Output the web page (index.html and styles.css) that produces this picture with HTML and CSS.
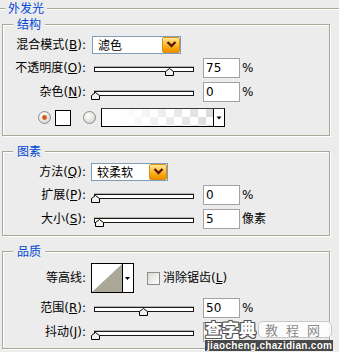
FILE: index.html
```html
<!DOCTYPE html>
<html>
<head>
<meta charset="utf-8">
<link rel="stylesheet" href="styles.css">
</head>
<body>
<div class="panel">
  <div class="outer">
    <div class="legend legend-outer">外发光</div>

    <div class="group g1">
      <div class="legend">结构</div>
      <div class="row r-sel">
        <span class="lbl">混合模式(<u>B</u>):</span>
        <div class="select sel-blend">
          <span class="sel-text">滤色</span>
          <span class="sel-btn"><svg width="17" height="16" viewBox="0 0 17 16"><polyline points="4.5,5.5 8.5,9.5 12.5,5.5" fill="none" stroke="#fff" stroke-width="1" opacity="0.6" transform="translate(0,1)"/><polyline points="4.5,5 8.5,9 12.5,5" fill="none" stroke="#5a1500" stroke-width="2.4"/></svg></span>
        </div>
      </div>
      <div class="row r-num mt4">
        <span class="lbl">不透明度(<u>O</u>):</span>
        <div class="slider"><div class="track"></div><svg class="thumb" style="left:74px" width="9" height="8" viewBox="0 0 9 8"><polygon points="0.5,3.5 4.5,0.5 8.5,3.5 8.5,7.5 0.5,7.5" fill="#f2f2ee" stroke="#000"/></svg></div>
        <div class="num">75</div><span class="unit">%</span>
      </div>
      <div class="row r-num mt4">
        <span class="lbl">杂色(<u>N</u>):</span>
        <div class="slider"><div class="track"></div><svg class="thumb" style="left:0px" width="9" height="8" viewBox="0 0 9 8"><polygon points="0.5,3.5 4.5,0.5 8.5,3.5 8.5,7.5 0.5,7.5" fill="#f2f2ee" stroke="#000"/></svg></div>
        <div class="num">0</div><span class="unit">%</span>
      </div>
      <div class="row r-color">
        <svg class="radio" width="13" height="13" viewBox="0 0 13 13"><defs><radialGradient id="rg1" cx="0.4" cy="0.35" r="0.75"><stop offset="0" stop-color="#ffffff"/><stop offset="1" stop-color="#d2d2ca"/></radialGradient></defs><circle cx="6.5" cy="6.5" r="6" fill="url(#rg1)" stroke="#8c8c8c"/><circle cx="6.5" cy="6.5" r="2.4" fill="#d5561d"/></svg>
        <div class="swatch"></div>
        <svg class="radio radio2" width="13" height="13" viewBox="0 0 13 13"><defs><radialGradient id="rg2" cx="0.4" cy="0.35" r="0.75"><stop offset="0" stop-color="#ffffff"/><stop offset="1" stop-color="#d2d2ca"/></radialGradient></defs><circle cx="6.5" cy="6.5" r="6" fill="url(#rg2)" stroke="#8c8c8c"/></svg>
        <div class="gradbox">
          <div class="grad-fill"></div>
          <div class="grad-arrow"><svg width="10" height="17" viewBox="0 0 10 17"><polygon points="2.5,7.5 7.5,7.5 5,10.5" fill="#000"/></svg></div>
        </div>
      </div>
    </div>

    <div class="group g2">
      <div class="legend">图素</div>
      <div class="row r-sel">
        <span class="lbl">方法(<u>Q</u>):</span>
        <div class="select sel-method">
          <span class="sel-text">较柔软</span>
          <span class="sel-btn"><svg width="17" height="16" viewBox="0 0 17 16"><polyline points="4.5,5.5 8.5,9.5 12.5,5.5" fill="none" stroke="#fff" stroke-width="1" opacity="0.6" transform="translate(0,1)"/><polyline points="4.5,5 8.5,9 12.5,5" fill="none" stroke="#5a1500" stroke-width="2.4"/></svg></span>
        </div>
      </div>
      <div class="row r-num mt4">
        <span class="lbl">扩展(<u>P</u>):</span>
        <div class="slider"><div class="track"></div><svg class="thumb" style="left:0px" width="9" height="8" viewBox="0 0 9 8"><polygon points="0.5,3.5 4.5,0.5 8.5,3.5 8.5,7.5 0.5,7.5" fill="#f2f2ee" stroke="#000"/></svg></div>
        <div class="num">0</div><span class="unit">%</span>
      </div>
      <div class="row r-num mt4">
        <span class="lbl">大小(<u>S</u>):</span>
        <div class="slider"><div class="track"></div><svg class="thumb" style="left:4px" width="9" height="8" viewBox="0 0 9 8"><polygon points="0.5,3.5 4.5,0.5 8.5,3.5 8.5,7.5 0.5,7.5" fill="#f2f2ee" stroke="#000"/></svg></div>
        <div class="num">5</div><span class="unit">像素</span>
      </div>
    </div>

    <div class="group g3">
      <div class="legend">品质</div>
      <div class="row r-contour">
        <span class="lbl">等高线:</span>
        <svg class="contour" width="43" height="30" viewBox="0 0 43 30"><rect x="0.5" y="0.5" width="42" height="29" fill="#fff" stroke="#000"/><polygon points="1,29 31,1 31,29" fill="#aba898"/><line x1="31.5" y1="0" x2="31.5" y2="30" stroke="#000"/><polygon points="34,14 39,14 36.5,17" fill="#000"/></svg>
        <div class="checkbox"></div>
        <span class="chk-label">消除锯齿(<u>L</u>)</span>
      </div>
      <div class="row r-num mt5">
        <span class="lbl">范围(<u>R</u>):</span>
        <div class="slider"><div class="track"></div><svg class="thumb" style="left:48px" width="9" height="8" viewBox="0 0 9 8"><polygon points="0.5,3.5 4.5,0.5 8.5,3.5 8.5,7.5 0.5,7.5" fill="#f2f2ee" stroke="#000"/></svg></div>
        <div class="num">50</div><span class="unit">%</span>
      </div>
      <div class="row r-num mt4">
        <span class="lbl">抖动(<u>J</u>):</span>
        <div class="slider"><div class="track"></div><svg class="thumb" style="left:0px" width="9" height="8" viewBox="0 0 9 8"><polygon points="0.5,3.5 4.5,0.5 8.5,3.5 8.5,7.5 0.5,7.5" fill="#f2f2ee" stroke="#000"/></svg></div>
        <div class="num"></div>
      </div>
    </div>
  </div>

  <div class="watermark">
    <div class="wm-top">
      <span class="wm-brand">查字典</span>
      <span class="wm-box">教程网</span>
    </div>
    <div class="wm-url">jiaocheng.chazidian.com</div>
  </div>
</div>
</body>
</html>
```

FILE: styles.css
```css
* { box-sizing: border-box; }

html, body {
  margin: 0;
  padding: 0;
  background: #ececec;
}

body {
  width: 339px;
  height: 352px;
  overflow: hidden;
  font-family: "DejaVu Sans", "Noto Sans CJK SC", sans-serif;
  font-size: 12px;
  color: #000;
}

u { text-decoration: underline; text-underline-offset: 1px; }

.panel {
  position: relative;
  width: 339px;
  height: 352px;
  padding-top: 8px;
}

.outer {
  border-top: 1px solid #a9a797;
  box-shadow: inset 0 1px 0 #fff;
}

.legend {
  display: table;
  margin: -8px 0 0 10px;
  padding: 0 4px;
  line-height: 14px;
  height: 14px;
  background: #ececec;
  color: #0046d5;
  font-family: "Noto Sans CJK SC", sans-serif;
  font-size: 12px;
  position: relative;
}

.legend-outer {
  margin-left: 5px;
  padding: 0 3px;
}

.group {
  margin-left: 2px;
  width: 328px;
  border: 1px solid #a9a797;
  box-shadow: inset 1px 1px 0 #fff, 1px 1px 0 #fff;
}

.g1 { margin-top: 9px; padding-bottom: 8px; }
.g2 { margin-top: 15px; padding-bottom: 6px; }
.g3 { margin-top: 15px; padding-bottom: 6px; }

.row {
  display: flex;
  align-items: center;
}

.mt4 { margin-top: 4px; }
.mt5 { margin-top: 5px; }

.lbl {
  width: 83px;
  text-align: right;
  white-space: nowrap;
  flex: none;
  line-height: 14px;
}

/* select */
.r-sel { margin-top: 5px; height: 18px; }

.select {
  height: 18px;
  border: 1px solid #7f9db9;
  background: #fff;
  display: flex;
  align-items: center;
  justify-content: space-between;
}

.sel-blend { margin-left: 6px; width: 89px; }
.sel-method { margin-left: 5px; width: 77px; }

.sel-text {
  padding-left: 5px;
  font-family: "Noto Sans CJK SC", sans-serif;
  line-height: 14px;
}

.sel-btn {
  width: 18px;
  height: 16px;
  border: 1px solid #d98f18;
  border-radius: 2px;
  background: linear-gradient(#ffe79a 0%, #ffc849 35%, #f6a300 75%, #ee9000 100%);
  display: flex;
  align-items: center;
  justify-content: center;
}

.sel-btn svg { display: block; flex: none; }

/* slider + number rows */
.r-num { height: 20px; }

.slider {
  position: relative;
  margin-left: 5px;
  width: 107px;
  height: 20px;
  flex: none;
}

.track {
  margin: 9px 0 0 3px;
  width: 100px;
  height: 5px;
  background: #fff;
  border: 1px solid #1a1a1a;
  box-shadow: 0 -1px 0 #b5b5ad;
}

.thumb {
  position: absolute;
  top: 10px;
  display: block;
}

.num {
  margin-left: 5px;
  width: 37px;
  height: 20px;
  border: 1px solid #a3a3a3;
  background: #fff;
  padding-left: 2px;
  line-height: 18px;
  flex: none;
}

.unit {
  margin-left: 2px;
  line-height: 14px;
}

/* colour row */
.r-color {
  margin-top: 6px;
  height: 19px;
  padding-left: 35px;
}

.radio { display: block; flex: none; }

.swatch {
  margin-left: 4px;
  width: 16px;
  height: 16px;
  border: 1px solid #000;
  background: #fff;
}

.radio2 { margin-left: 12px; }

.gradbox {
  margin-left: 5px;
  width: 124px;
  height: 19px;
  border: 1px solid #000;
  border-top-color: #3a3a3a;
  display: flex;
}

.grad-fill {
  flex: 1;
  background:
    linear-gradient(to right, #fff 15%, rgba(255,255,255,0.15) 100%),
    conic-gradient(#d6d6d6 25%, #fff 0 50%, #d6d6d6 0 75%, #fff 0) 0 0 / 16px 16px;
}

.grad-arrow {
  width: 11px;
  border-left: 1px solid #000;
  background: #fff;
}

.grad-arrow svg { display: block; }

/* contour row */
.r-contour {
  margin-top: 5px;
  height: 30px;
}

.contour {
  display: block;
  margin-left: 5px;
  flex: none;
}

.checkbox {
  margin-left: 13px;
  width: 13px;
  height: 13px;
  border: 1px solid #8c8c8c;
  background: linear-gradient(135deg, #d8d8d0, #ffffff);
  flex: none;
}

.chk-label {
  margin-left: 3px;
  line-height: 14px;
  white-space: nowrap;
}

/* watermark overlay */
.watermark {
  position: absolute;
  left: 205px;
  top: 319px;
  width: 128px;
}

.wm-top {
  display: flex;
  align-items: center;
  height: 20px;
}

.wm-brand {
  font-family: "Noto Sans CJK SC", sans-serif;
  font-weight: 900;
  font-size: 17px;
  line-height: 18px;
  height: 18px;
  color: #fff;
  text-shadow:
    1px 0 0 #555, -1px 0 0 #555, 0 1px 0 #555, 0 -1px 0 #555,
    1px 1px 0 #555, -1px -1px 0 #555, 1px -1px 0 #555, -1px 1px 0 #555;
}

.wm-box {
  margin-left: 2px;
  height: 17px;
  padding: 0 3px 0 6px;
  border-radius: 5px;
  background: rgba(255,255,255,0.85);
  border: 1px solid #c9c9c9;
  color: #8b8b8b;
  font-family: "Noto Sans CJK SC", sans-serif;
  font-size: 13px;
  line-height: 15px;
  letter-spacing: 8px;
}

.wm-url {
  margin-top: 1px;
  height: 11px;
  width: 128px;
  font-family: "Liberation Sans", sans-serif;
  font-weight: bold;
  font-size: 10px;
  line-height: 11px;
  letter-spacing: 0.3px;
  color: #fff;
  background: #4a4a4a;
  padding-left: 2px;
  white-space: nowrap;
  text-shadow: 0 0 1px #222;
}
```
